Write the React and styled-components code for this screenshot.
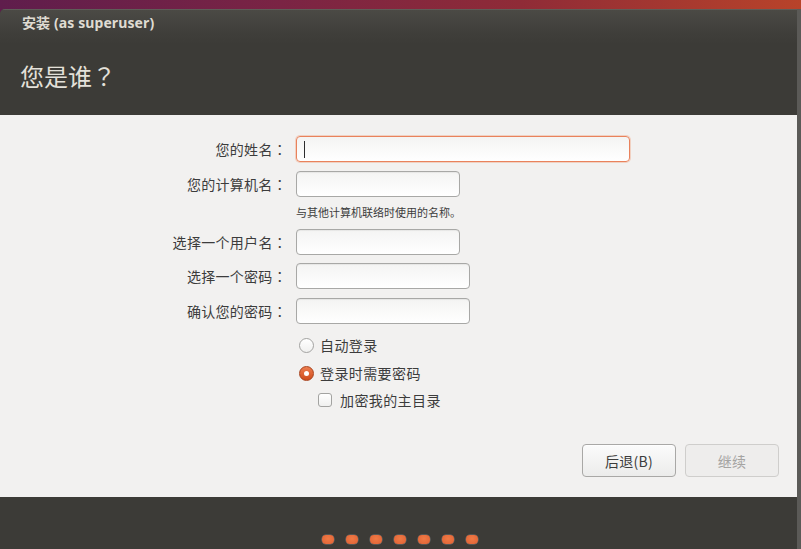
import React from "react";
import styled, { createGlobalStyle } from "styled-components";

const Global = createGlobalStyle`
  html, body { margin: 0; padding: 0; }
  body {
    width: 801px; height: 549px; overflow: hidden;
    font-family: "Noto Sans", "Noto Sans CJK SC", sans-serif;
  }
`;

const Screen = styled.div`
  width: 801px;
  height: 549px;
  padding-top: 9px;
  box-sizing: border-box;
  background: linear-gradient(90deg, #5f1d4c 0%, #7a2444 35%, #8f2b37 65%, #b8432a 100%);
  display: flex;
`;

const Window = styled.div`
  flex: 1;
  display: flex;
  flex-direction: column;
  border-right: 4px solid #5b5a57;
  border-top-left-radius: 5px;
  overflow: hidden;
  background: #3c3b37;
`;

const Header = styled.header`
  height: 106px;
  box-sizing: border-box;
  padding: 4px 22px 0;
  border-top: 1px solid #5e5d58;
  background: linear-gradient(180deg, #4b4a45 0px, #3f3e3a 24px, #3c3b37 34px);
`;

const Title = styled.div`
  font-size: 14px;
  font-weight: 700;
  line-height: 17px;
  color: #dfdbd2;
  letter-spacing: 0.1px;
`;

const Heading = styled.h1`
  margin: 30px 0 0 -2px;
  font-size: 24px;
  font-weight: 400;
  line-height: 30px;
  color: #e4e1da;
  font-family: "Noto Sans CJK SC", sans-serif;
`;

const Punct = styled.span`
  font-family: "Noto Sans CJK TC", sans-serif;
`;

const Content = styled.main`
  height: 382px;
  box-sizing: border-box;
  background: #f2f1f0;
  display: flex;
  flex-direction: column;
  padding: 21px 18px 20px 0;
  color: #3c3c3c;
  font-family: "Noto Sans CJK SC", sans-serif;
`;

const Form = styled.div`
  display: flex;
  flex-direction: column;
`;

const FieldRow = styled.div`
  display: grid;
  grid-template-columns: 287px auto;
  column-gap: 9px;
  align-items: center;
  margin-top: ${(p) => p.$gap || 0}px;
`;

const Label = styled.label`
  text-align: right;
  font-size: 14px;
  line-height: 20px;
  letter-spacing: 0.3px;
`;

const Field = styled.div`
  width: ${(p) => p.$w}px;
  height: 26px;
  box-sizing: border-box;
  border-radius: 4px;
  border: 1px solid ${(p) => (p.$focus ? "#e9825c" : "#a8a8a6")};
  box-shadow: ${(p) => (p.$focus ? "0 0 0 1px rgba(240,150,110,0.35)" : "inset 0 1px 1px rgba(0,0,0,0.06)")};
  background: linear-gradient(180deg, #f4f4f3 0%, #ffffff 100%);
  display: flex;
  align-items: center;
  padding-left: 7px;
`;

const Caret = styled.span`
  width: 1px;
  height: 17px;
  background: #2d2d2d;
`;

const Hint = styled.div`
  margin: 8px 0 0 296px;
  font-size: 11px;
  line-height: 14px;
`;

const Option = styled.div`
  display: flex;
  align-items: center;
  height: 20px;
  margin-top: ${(p) => p.$gap}px;
  margin-left: ${(p) => p.$indent}px;
  font-size: 14px;
  letter-spacing: 0.4px;
`;

const Radio = styled.span`
  width: 15px;
  height: 15px;
  box-sizing: border-box;
  border-radius: 50%;
  margin-right: 6px;
  display: flex;
  align-items: center;
  justify-content: center;
  border: 1px solid ${(p) => (p.$checked ? "#a8421c" : "#a3a3a1")};
  background: ${(p) =>
    p.$checked
      ? "linear-gradient(180deg, #ed7d4f 0%, #cf4c1d 100%)"
      : "linear-gradient(180deg, #ffffff 0%, #f0f0ef 100%)"};
  &::after {
    content: "";
    display: ${(p) => (p.$checked ? "block" : "none")};
    width: 5px;
    height: 5px;
    border-radius: 50%;
    background: #ffffff;
  }
`;

const Check = styled.span`
  width: 14px;
  height: 14px;
  box-sizing: border-box;
  border-radius: 3px;
  margin-right: 8px;
  border: 1px solid #a3a3a1;
  background: linear-gradient(180deg, #ffffff 0%, #f0f0ef 100%);
`;

const Buttons = styled.div`
  margin-top: auto;
  display: flex;
  justify-content: flex-end;
  gap: 9px;
`;

const Button = styled.button`
  width: 94px;
  height: 33px;
  border-radius: 4px;
  font-family: "Noto Sans CJK SC", sans-serif;
  font-size: 14px;
  letter-spacing: 0.3px;
  padding: 0;
  border: 1px solid ${(p) => (p.disabled ? "#cfcecc" : "#a9a8a6")};
  color: ${(p) => (p.disabled ? "#a5a4a2" : "#3c3c3c")};
  background: ${(p) =>
    p.disabled ? "#eeedec" : "linear-gradient(180deg, #fbfbfb 0%, #ececeb 100%)"};
  box-shadow: ${(p) => (p.disabled ? "none" : "0 1px 0 rgba(255,255,255,0.8) inset")};
`;

const Footer = styled.footer`
  flex: 1;
  display: flex;
  justify-content: center;
  align-items: flex-start;
  gap: 12px;
  padding-top: 38px;
  padding-left: 3px;
  box-sizing: border-box;
`;

const Dot = styled.span`
  width: 12px;
  height: 9px;
  border-radius: 4px;
  background: radial-gradient(ellipse at 50% 40%, #f07a45 0%, #e5693a 70%, #b06648 100%);
  box-shadow: 0 0 0 0.5px rgba(140,140,140,0.7);
`;

const Colon = () => <Punct>：</Punct>;

export default function App() {
  return (
    <>
      <Global />
      <Screen>
        <Window>
          <Header>
            <Title>安装 (as superuser)</Title>
            <Heading>
              您是谁<Punct>？</Punct>
            </Heading>
          </Header>
          <Content>
            <Form>
              <FieldRow>
                <Label>您的姓名<Colon /></Label>
                <Field $w={334} $focus>
                  <Caret />
                </Field>
              </FieldRow>
              <FieldRow $gap={9}>
                <Label>您的计算机名<Colon /></Label>
                <Field $w={164} />
              </FieldRow>
              <Hint>与其他计算机联络时使用的名称。</Hint>
              <FieldRow $gap={10}>
                <Label>选择一个用户名<Colon /></Label>
                <Field $w={164} />
              </FieldRow>
              <FieldRow $gap={8}>
                <Label>选择一个密码<Colon /></Label>
                <Field $w={174} />
              </FieldRow>
              <FieldRow $gap={9}>
                <Label>确认您的密码<Colon /></Label>
                <Field $w={174} />
              </FieldRow>
              <Option $gap={11} $indent={299}>
                <Radio />
                自动登录
              </Option>
              <Option $gap={8} $indent={299}>
                <Radio $checked />
                登录时需要密码
              </Option>
              <Option $gap={7} $indent={318}>
                <Check />
                加密我的主目录
              </Option>
            </Form>
            <Buttons>
              <Button>后退(B)</Button>
              <Button disabled>继续</Button>
            </Buttons>
          </Content>
          <Footer>
            {Array.from({ length: 7 }).map((_, i) => (
              <Dot key={i} />
            ))}
          </Footer>
        </Window>
      </Screen>
    </>
  );
}
